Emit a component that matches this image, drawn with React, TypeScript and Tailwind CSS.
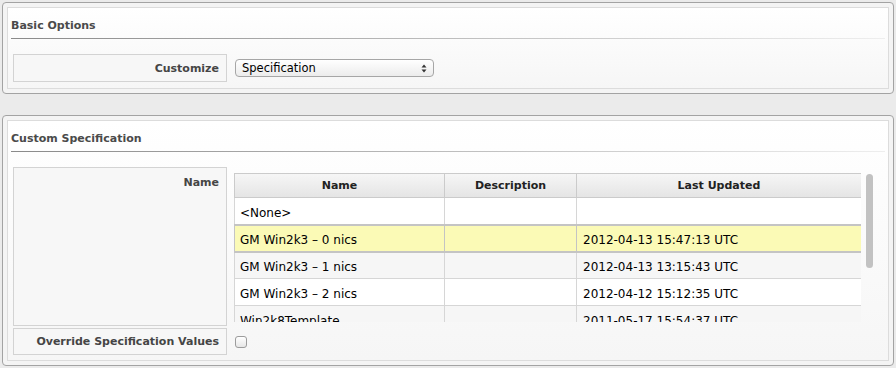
import React from "react";

// Rows of the custom specification table
const specs = [
    { name: "<None>", description: "", updated: "", shade: false },
    { name: "GM Win2k3 – 0 nics", description: "", updated: "2012-04-13 15:47:13 UTC", selected: true, shade: false },
    { name: "GM Win2k3 – 1 nics", description: "", updated: "2012-04-13 13:15:43 UTC", shade: true },
    { name: "GM Win2k3 – 2 nics", description: "", updated: "2012-04-12 15:12:35 UTC", shade: false },
    { name: "Win2k8Template", description: "", updated: "2011-05-17 15:54:37 UTC", shade: true },
];

const Panel = ({ title, children, className = "", bottom = "pb-[5px]" }: { title: string; children: React.ReactNode; className?: string; bottom?: string }) => (
    <div className={`rounded-[4px] border border-[#a3a3a3] bg-[#f4f4f4] p-[4px] ${className}`}>
        <div className={`border border-[#dcdcdc] bg-gradient-to-b from-white to-[#f6f6f6] px-[3px] ${bottom}`}>
            <div className="pt-[10px] pb-[5px] text-[11px] leading-[15px] font-bold text-[#4a4a4a]">{title}</div>
            <div className="h-px bg-gradient-to-r from-[#8a8a8a] via-[#bdbdbd] to-[#eeeeee]" />
            <div className="pt-[15px] pl-[2px] flex flex-col gap-[2px]">{children}</div>
        </div>
    </div>
);

const FieldRow = ({ label, height, children }: { label: string; height: string; children: React.ReactNode }) => (
    <div className={`flex gap-[7px] ${height}`}>
        <div className="w-[214px] shrink-0 border border-[#d3d3d3] bg-[#f7f7f7] pr-[7px] flex justify-end items-center text-[11px] leading-[15px] font-bold text-[#454545]">
            {label}
        </div>
        <div className="flex-1 flex items-center">{children}</div>
    </div>
);

const SelectArrows = () => (
    <svg width="6" height="9" viewBox="0 0 6 9" className="text-[#333]">
        <path d="M3 0.5 L5.5 3.5 L0.5 3.5 Z" fill="currentColor" />
        <path d="M3 8.5 L5.5 5.5 L0.5 5.5 Z" fill="currentColor" />
    </svg>
);

const App = () => {
    return (
        <div className="w-[896px] h-[368px] overflow-hidden bg-[#ebebeb] px-[2px] pt-[2px] font-['Lucida_Grande','DejaVu_Sans',sans-serif] text-black">
            {/* Basic Options */}
            <Panel title="Basic Options" bottom="pb-[6px]">
                <FieldRow label="Customize" height="h-[28px]">
                    <div className="ml-px w-[199px] h-[18px] rounded-[4px] border border-[#a6a6a6] bg-gradient-to-b from-white to-[#ececec] flex items-center justify-between pl-[6px] pr-[6px] text-[11.5px] leading-none">
                        <span className="pt-[2px]">Specification</span>
                        <SelectArrows />
                    </div>
                </FieldRow>
            </Panel>

            {/* Custom Specification */}
            <Panel title="Custom Specification" className="mt-[21px]">
                <div className="flex gap-[7px] h-[159px]">
                    <div className="w-[214px] shrink-0 border border-[#d3d3d3] bg-[#f7f7f7] pr-[7px] pt-[7px] flex justify-end items-start text-[11px] leading-[15px] font-bold text-[#454545]">
                        Name
                    </div>
                    <div className="pt-[6px] flex">
                        <div className="w-[627px] h-[149px] overflow-hidden">
                            <table className="w-[627px] table-fixed border-collapse text-[12px]">
                                <colgroup>
                                    <col className="w-[210px]" />
                                    <col className="w-[132px]" />
                                    <col className="w-[285px]" />
                                </colgroup>
                                <thead>
                                    <tr className="h-[24px] bg-gradient-to-b from-[#f6f6f6] to-[#e4e4e4]">
                                        <th className="border border-[#cbcbcb] pt-[2px] text-[11px] font-bold text-[#222]">Name</th>
                                        <th className="border border-[#cbcbcb] pt-[2px] text-[11px] font-bold text-[#222]">Description</th>
                                        <th className="border border-[#cbcbcb] pt-[2px] text-[11px] font-bold text-[#222]">Last Updated</th>
                                    </tr>
                                </thead>
                                <tbody>
                                    {specs.map((s) => {
                                        const cell = s.selected ? "border-[#c4c4c4] border-y-2" : "border-[#d6d6d6]";
                                        return (
                                            <tr
                                                key={s.name}
                                                className={`h-[27px] ${s.selected ? "bg-[#fbfab6]" : s.shade ? "bg-[#f6f6f6]" : "bg-white"}`}
                                            >
                                                <td className={`border pt-[4px] px-[5px] whitespace-nowrap ${cell}`}>{s.name}</td>
                                                <td className={`border pt-[4px] px-[6px] ${cell}`}>{s.description}</td>
                                                <td className={`border pt-[4px] px-[6px] whitespace-nowrap ${cell}`}>{s.updated}</td>
                                            </tr>
                                        );
                                    })}
                                </tbody>
                            </table>
                        </div>
                        {/* scrollbar */}
                        <div className="w-[16px] pl-[5px] pt-px">
                            <div className="w-[7px] h-[94px] rounded-full bg-[#c2c2c2]" />
                        </div>
                    </div>
                </div>
                <FieldRow label="Override Specification Values" height="h-[27px]">
                    <div className="ml-px mt-px w-[12px] h-[12px] rounded-[3px] border border-[#9c9c9c] bg-gradient-to-b from-white to-[#e6e6e6]" />
                </FieldRow>
            </Panel>
        </div>
    );
};

export default App;
